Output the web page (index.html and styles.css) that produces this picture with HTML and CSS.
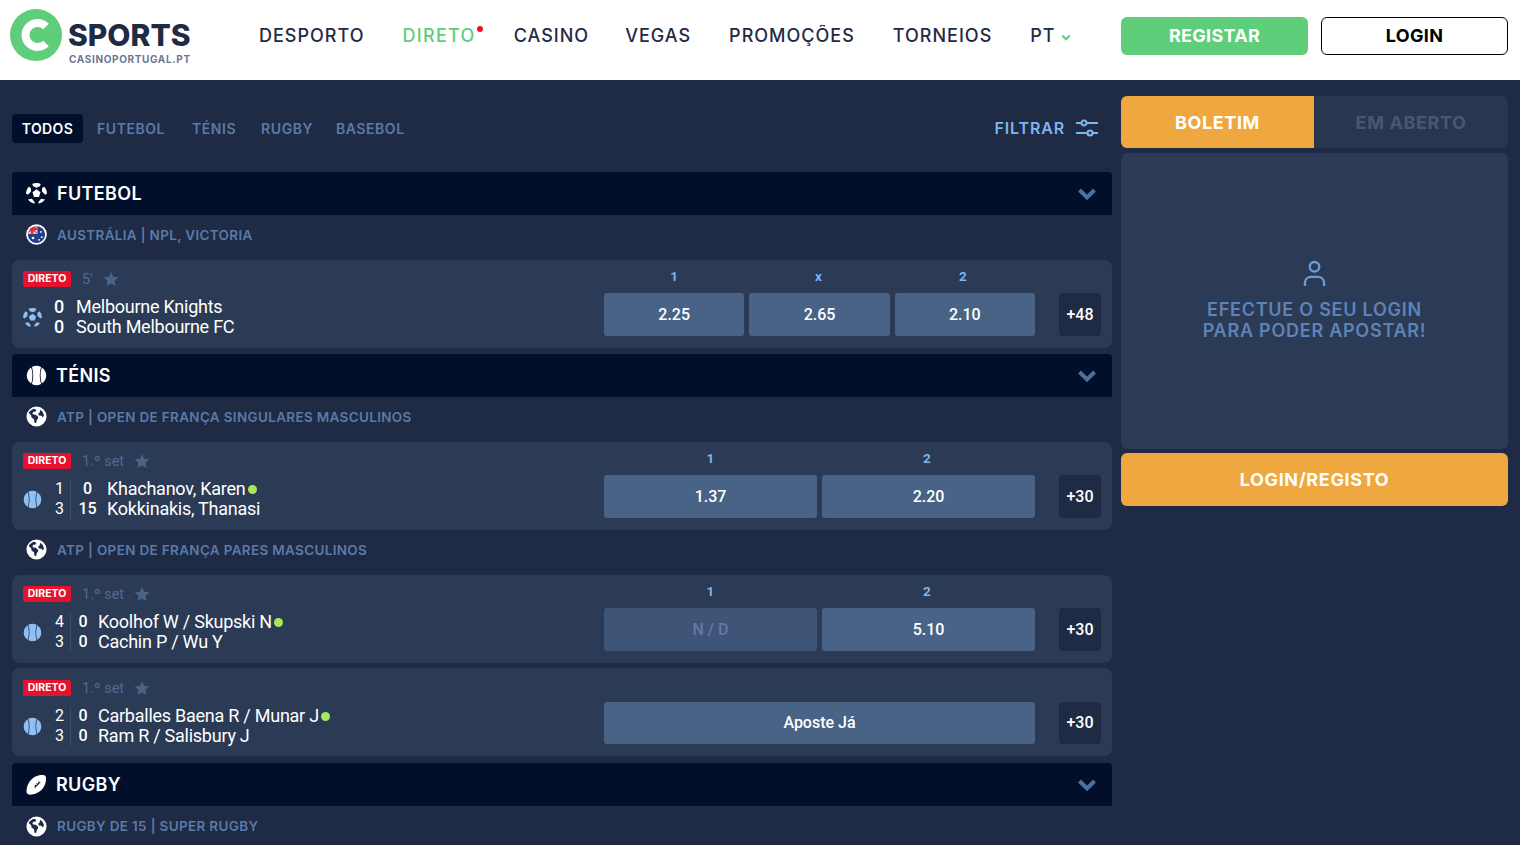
FILE: index.html
```html
<!DOCTYPE html>
<html lang="pt">
<head>
<meta charset="utf-8">
<title>CSports</title>
<link rel="stylesheet" href="styles.css">
</head>
<body>
<svg class="defs" width="0" height="0" aria-hidden="true">
  <defs>
    <symbol id="ball" viewBox="1 1 22 22">
      <path d="M12 7.600l4.200 3.100-1.600 4.900H9.400l-1.600-4.900z"/>
      <path d="M7.500 2A11 11 0 0 1 16.500 2L15.500 4.500 12 6 8.500 4.500z"/>
      <path d="M3.800 4.800L6.200 6.300 6.300 10 2.900 13.200 1 12A11 11 0 0 1 3.800 4.800z"/>
      <path d="M20.200 4.800L17.800 6.300 17.700 10 21.100 13.200 23 12A11 11 0 0 0 20.200 4.800z"/>
      <path d="M3 18.300L7.200 17.600 10 21 9.700 22.800A11 11 0 0 1 3 18.300z"/>
      <path d="M21 18.300L16.800 17.600 14 21 14.300 22.800A11 11 0 0 0 21 18.300z"/>
    </symbol>
    <symbol id="tennis" viewBox="0 0 24 24">
      <path d="M5.900 2.800Q8.800 12 5.900 21.200A11 11 0 0 1 5.900 2.800z"/>
      <path d="M6.800 2.200Q9.800 12 6.800 21.800A11 11 0 0 0 17.200 21.800Q14.200 12 17.200 2.200A11 11 0 0 0 6.800 2.200z"/>
      <path d="M18.100 2.800Q15.200 12 18.100 21.200A11 11 0 0 0 18.100 2.800z"/>
    </symbol>
    <symbol id="globe" viewBox="0 0 24 24">
      <path fill-rule="evenodd" d="M12 .5a11.500 11.500 0 1 0 0 23 11.500 11.500 0 0 0 0-23zM9 3.200c1.300.3 2.100.9 2.800 1.700l-1.300 1.700-2-.1-1.300 1.900 1.200 1.300 2.600.2 2.300 1.700.8 2.100-1.700 2.400-.8 3.400-1.800-.4-.8-4.300-2.600-1.500-.5-2.800-2.800-2.500C4.300 5.900 6.400 3.900 9 3.200zM16.200 4.400l2.900 2.400 1.400 3.500-1.100 2.900-1.900-2-2.700-.3-1-2 1.800-1.500z"/>
    </symbol>
    <symbol id="rugby" viewBox="0 0 24 24">
      <path fill-rule="evenodd" d="M15 1.500c3.300-.7 6-.6 7 .5 1 1 1.200 3.700.5 7-.7 3.200-2.300 6.800-4.900 9.300-2.600 2.600-6.200 4.200-9.400 4.900-3.200.7-5.700.5-6.700-.5s-1.200-3.500-.5-6.700c.7-3.200 2.300-6.800 4.900-9.400C8.300 4 11.800 2.200 15 1.500zM14.500 8.200l-.9.900 1 1-1.100 1.100-1-1-.9.900 1 1-1.100 1.100-1-1-.9.900 1 1-1.200 1.100.8.800 4.300-4.300 1.100-1.100 1-1-.8-.8-1 1z"/>
    </symbol>
    <symbol id="star" viewBox="0 0 24 24">
      <path d="M12 1.500l3.300 7 7.700 1-5.700 5.300 1.500 7.600L12 18.600l-6.800 3.800 1.500-7.600L1 9.500l7.700-1z"/>
    </symbol>
    <symbol id="chev" viewBox="0 0 20 14">
      <path d="M2.500 3L10 10.500 17.500 3" fill="none" stroke="currentColor" stroke-width="4"/>
    </symbol>
  </defs>
</svg>

<header class="topbar">
  <a class="logo">
    <svg class="logo-mark" viewBox="0 0 52 52">
      <circle cx="26" cy="26" r="26" fill="#5fce7a"/>
      <path d="M36 17.500A12 12 0 1 0 36 34.500" fill="none" stroke="#fff" stroke-width="8"/>
    </svg>
    <span class="logo-text">
      <span class="logo-name">SPORTS</span>
      <span class="logo-sub">CASINOPORTUGAL.PT</span>
    </span>
  </a>
  <nav class="nav">
    <a class="nav-item">DESPORTO</a>
    <a class="nav-item live">DIRETO<i class="live-dot"></i></a>
    <a class="nav-item tight">CASINO</a>
    <a class="nav-item">VEGAS</a>
    <a class="nav-item">PROMOÇÕES</a>
    <a class="nav-item">TORNEIOS</a>
    <a class="nav-item">PT<svg class="lang-chev"><use href="#chev"/></svg></a>
  </nav>
  <div class="auth">
    <a class="btn btn-green">REGISTAR</a>
    <a class="btn btn-outline">LOGIN</a>
  </div>
</header>

<main class="page">
  <section class="events">
    <div class="filters">
      <a class="chip on">TODOS</a>
      <a class="chip c1">FUTEBOL</a>
      <a class="chip c2">TÉNIS</a>
      <a class="chip c3">RUGBY</a>
      <a class="chip c4">BASEBOL</a>
      <a class="filter-btn">FILTRAR
        <svg class="filter-ico" viewBox="0 0 24 18" fill="none" stroke="currentColor" stroke-width="2.200">
          <path d="M1 4h5M12 4h11M1 14h11M18 14h5"/>
          <circle cx="9" cy="4" r="2.500"/><circle cx="15" cy="14" r="2.500"/>
        </svg>
      </a>
    </div>

    <div class="sport">
      <svg class="sport-ico"><use href="#ball"/></svg><span class="sport-name s1">FUTEBOL</span>
      <svg class="sport-chev"><use href="#chev"/></svg>
    </div>
    <div class="league">
      <svg class="league-ico" viewBox="0 0 24 24">
        <defs><clipPath id="au"><circle cx="12" cy="12" r="9.800"/></clipPath></defs>
        <circle cx="12" cy="12" r="11.800" fill="#fff"/>
        <circle cx="12" cy="12" r="9.800" fill="#233f8a"/>
        <g clip-path="url(#au)">
          <path d="M1 1h12v10H1z" fill="#f4f4f8"/>
          <path d="M1 5.500h12M7 1v10" stroke="#e0283c" stroke-width="3"/>
          <path d="M2 2l10 8M12 2L2 10" stroke="#e0283c" stroke-width="1.200"/>
        </g>
        <circle cx="17" cy="9" r="1" fill="#fff"/><circle cx="18" cy="15" r="1" fill="#fff"/><circle cx="8" cy="16" r="1.500" fill="#fff"/><circle cx="15" cy="18" r="1" fill="#fff"/>
      </svg>
      <span>AUSTRÁLIA | NPL, VICTORIA</span>
    </div>
    <article class="card">
      <div class="info">
        <div class="meta"><b class="badge">DIRETO</b><span class="time">5'</span><svg class="star"><use href="#star"/></svg></div>
        <div class="teams">
          <svg class="team-ico"><use href="#ball"/></svg>
          <div class="soccer-score"><span>0</span><span>0</span></div>
          <div class="names gap-a"><span>Melbourne Knights</span><span>South Melbourne FC</span></div>
        </div>
      </div>
      <div class="market">
        <div class="labels"><span>1</span><span>x</span><span>2</span></div>
        <div class="odds"><a class="odd">2.25</a><a class="odd">2.65</a><a class="odd">2.10</a></div>
      </div>
      <a class="more">+48</a>
    </article>

    <div class="sport s-gap">
      <svg class="sport-ico"><use href="#tennis"/></svg><span class="sport-name">TÉNIS</span>
      <svg class="sport-chev"><use href="#chev"/></svg>
    </div>
    <div class="league">
      <svg class="league-ico"><use href="#globe"/></svg>
      <span>ATP | OPEN DE FRANÇA SINGULARES MASCULINOS</span>
    </div>
    <article class="card">
      <div class="info">
        <div class="meta"><b class="badge">DIRETO</b><span class="time">1.º set</span><svg class="star"><use href="#star"/></svg></div>
        <div class="teams">
          <svg class="team-ico"><use href="#tennis"/></svg>
          <div class="sets"><span>1</span><span>3</span></div>
          <div class="points wide"><span>0</span><span>15</span></div>
          <div class="names"><span>Khachanov, Karen<i class="serve"></i></span><span>Kokkinakis, Thanasi</span></div>
        </div>
      </div>
      <div class="market">
        <div class="labels"><span>1</span><span>2</span></div>
        <div class="odds"><a class="odd">1.37</a><a class="odd">2.20</a></div>
      </div>
      <a class="more">+30</a>
    </article>

    <div class="league">
      <svg class="league-ico"><use href="#globe"/></svg>
      <span>ATP | OPEN DE FRANÇA PARES MASCULINOS</span>
    </div>
    <article class="card">
      <div class="info">
        <div class="meta"><b class="badge">DIRETO</b><span class="time">1.º set</span><svg class="star"><use href="#star"/></svg></div>
        <div class="teams">
          <svg class="team-ico"><use href="#tennis"/></svg>
          <div class="sets"><span>4</span><span>3</span></div>
          <div class="points"><span>0</span><span>0</span></div>
          <div class="names"><span>Koolhof W / Skupski N<i class="serve"></i></span><span>Cachin P / Wu Y</span></div>
        </div>
      </div>
      <div class="market">
        <div class="labels"><span>1</span><span>2</span></div>
        <div class="odds"><a class="odd off">N / D</a><a class="odd">5.10</a></div>
      </div>
      <a class="more">+30</a>
    </article>

    <article class="card c-gap">
      <div class="info">
        <div class="meta"><b class="badge">DIRETO</b><span class="time">1.º set</span><svg class="star"><use href="#star"/></svg></div>
        <div class="teams">
          <svg class="team-ico"><use href="#tennis"/></svg>
          <div class="sets"><span>2</span><span>3</span></div>
          <div class="points"><span>0</span><span>0</span></div>
          <div class="names"><span>Carballes Baena R / Munar J<i class="serve"></i></span><span>Ram R / Salisbury J</span></div>
        </div>
      </div>
      <div class="market">
        <div class="labels"></div>
        <div class="odds"><a class="odd">Aposte Já</a></div>
      </div>
      <a class="more">+30</a>
    </article>

    <div class="sport r-gap">
      <svg class="sport-ico"><use href="#rugby"/></svg><span class="sport-name">RUGBY</span>
      <svg class="sport-chev"><use href="#chev"/></svg>
    </div>
    <div class="league last">
      <svg class="league-ico"><use href="#globe"/></svg>
      <span>RUGBY DE 15 | SUPER RUGBY</span>
    </div>
  </section>

  <aside class="slip">
    <div class="slip-tabs">
      <a class="slip-tab active">BOLETIM</a>
      <a class="slip-tab">EM ABERTO</a>
    </div>
    <div class="slip-body">
      <svg class="user-ico" viewBox="0 0 24 28" fill="none" stroke="currentColor" stroke-width="2.500">
        <circle cx="12" cy="7" r="5"/>
        <path d="M2 27v-3c0-4 3-6.500 6.500-6.500h7c3.500 0 6.500 2.500 6.500 6.500v3"/>
      </svg>
      <p class="slip-msg">EFECTUE O SEU LOGIN<br>PARA PODER APOSTAR!</p>
    </div>
    <a class="slip-login">LOGIN/REGISTO</a>
  </aside>
</main>
</body>
</html>
```
FILE: styles.css
```css
* { box-sizing: border-box; }
html, body { margin: 0; padding: 0; }
body {
  height: 845px;
  overflow: hidden;
  background: #1f2a44;
  font-family: Inter, "Liberation Sans", sans-serif;
  color: #fff;
}
a { display: block; }
.defs { display: block; height: 0; }

.topbar {
  height: 80px;
  background: #fff;
  display: flex;
  align-items: center;
  padding: 0 12px 0 10px;
}
.logo { display: flex; align-items: flex-start; width: 249px; height: 52px; margin-top: -11px; gap: 7px; }
.logo-mark { width: 52px; height: 52px; flex: none; }
.logo-text { display: flex; flex-direction: column; padding-top: 11px; }
.logo-name { font-size: 30px; line-height: 31px; font-weight: 800; color: #1f2a44; margin-left: -1px; }
.logo-sub { font-size: 10px; line-height: 12px; margin-top: 2px; font-weight: 700; color: #6d7693; letter-spacing: .65px; }

.nav { display: flex; gap: 38px; align-items: center; margin-top: -9px; flex: 1; }
.nav-item { position: relative; font-size: 18px; line-height: 22px; font-weight: 500; color: #1f2a44; letter-spacing: 1px; display: flex; align-items: center; }
.nav-item.live { color: #5fce7a; letter-spacing: 1.300px; }
.nav-item.tight { margin-right: -2px; }
.live-dot { position: absolute; right: -7px; top: 1px; width: 6px; height: 6px; border-radius: 50%; background: #e8112d; }
.lang-chev { width: 10px; height: 7px; margin-left: 5px; margin-top: 4px; color: #5fce7a; }

.auth { display: flex; gap: 13px; margin-top: -9px; }
.btn {
  width: 187px;
  height: 38px;
  border-radius: 6px;
  font-size: 18px;
  font-weight: 700;
  line-height: 38px;
  text-align: center;
  letter-spacing: .3px;
}
.btn-green { background: #5fce7a; color: #fff; }
.btn-outline { background: #fff; color: #000; border: 1px solid #000; line-height: 36px; }

.page { display: flex; gap: 9px; padding: 0 12px; }
.events { width: 1100px; flex: none; }
.filters { height: 92px; display: flex; align-items: center; padding-top: 4px; }
.chip { font-size: 14px; font-weight: 600; color: #5a7aa8; line-height: 29px; letter-spacing: .55px; }
.chip.on { background: #020f2a; color: #fff; border-radius: 4px; width: 71px; text-align: center; letter-spacing: .35px; }
.c1 { margin-left: 14px; }
.c2 { margin-left: 27px; }
.c3 { margin-left: 25px; }
.c4 { margin-left: 23px; }
.filter-btn { margin-left: auto; margin-right: 13px; display: flex; align-items: center; gap: 10px; font-size: 16px; font-weight: 600; color: #7eb4ee; letter-spacing: .85px; }
.filter-ico { width: 24px; height: 18px; }

.sport {
  height: 43px;
  background: #020f2a;
  border-radius: 4px 4px 0 0;
  display: flex;
  align-items: center;
  padding: 0 15px 0 14px;
}
.s-gap { margin-top: 6px; }
.r-gap { margin-top: 7px; }
.sport-ico { width: 21px; height: 21px; fill: #fff; flex: none; }
.sport-name { margin-left: 9px; font-size: 18px; font-weight: 600; letter-spacing: .35px; }
.sport-name.s1 { margin-left: 10px; }
.sport-chev { margin-left: auto; width: 20px; height: 14px; color: #50709c; }

.league {
  height: 45px;
  display: flex;
  align-items: center;
  padding: 0 0 6px 14px;
  font-size: 13.500px;
  font-weight: 600;
  color: #5a7aa8;
  letter-spacing: .33px;
  gap: 10px;
}
.league.last { height: 40px; padding-bottom: 0; }
.league-ico { width: 21px; height: 21px; fill: #fff; flex: none; }

.card {
  height: 88px;
  background: #2b3a55;
  border-radius: 8px;
  padding: 0 11px;
  display: flex;
  align-items: flex-start;
}
.c-gap { margin-top: 5px; }
.c-gap .info { padding-top: 12px; }
.c-gap .market { padding-top: 9px; }
.c-gap .odd { height: 42px; line-height: 41px; }
.c-gap .more { margin-top: 34px; height: 42px; line-height: 41px; }
.info { width: 581px; flex: none; padding-top: 11px; }
.meta { display: flex; align-items: center; height: 16px; font-family: Roboto, sans-serif; }
.badge { width: 48px; height: 16px; background: #e8112d; border-radius: 2px; font-family: Inter, sans-serif; font-size: 10.500px; line-height: 16px; font-weight: 700; text-align: center; color: #fff; }
.time { margin-left: 11px; font-size: 14.500px; color: #506a90; }
.star { width: 16px; height: 16px; margin-left: 10px; fill: #4a6488; }
.teams { display: flex; margin-top: 10px; align-items: center; font-family: Roboto, sans-serif; font-size: 18px; line-height: 20px; }
.team-ico { width: 19px; height: 19px; fill: #8fc0f4; flex: none; }
.soccer-score { display: flex; flex-direction: column; margin-left: 12px; width: 10px; text-align: center; font-weight: 500; }
.sets { display: flex; flex-direction: column; margin-left: 12px; width: 17px; border-right: 1px solid #3e4f6d; font-size: 16px; text-align: left; padding-left: 1px; }
.points { display: flex; flex-direction: column; margin-left: 7px; width: 10px; font-size: 16px; font-weight: 500; text-align: center; }
.points.wide { width: 19px; margin-left: 7px; }
.names { display: flex; flex-direction: column; margin-left: 10px; letter-spacing: -.25px; }
.names span { display: flex; align-items: center; }
.gap-a { margin-left: 12px; }
.serve { width: 9px; height: 9px; margin-left: 2px; border-radius: 50%; background: #a6e85a; }

.market { width: 431px; flex: none; padding-top: 8px; }
.labels { height: 16px; margin-left: -2px; display: flex; font-family: Roboto, sans-serif; font-size: 13.500px; line-height: 16px; font-weight: 700; color: #7eb4ee; }
.labels span { flex: 1; text-align: center; }
.odds { display: flex; gap: 5px; margin-top: 9px; }
.odd { flex: 1; height: 43px; background: #496386; border-radius: 3px; font-family: Roboto, sans-serif; font-size: 16px; font-weight: 500; line-height: 43px; text-align: center; }
.odd.off { color: #5f7ba5; background: #3f5577; }
.more { margin-left: 24px; margin-top: 33px; width: 42px; height: 43px; background: #1f2a44; border-radius: 4px; font-family: Roboto, sans-serif; font-size: 16px; font-weight: 500; line-height: 43px; text-align: center; }

.slip { width: 387px; flex: none; padding-top: 16px; }
.slip-tabs { display: flex; height: 52px; background: #2a3650; border-radius: 6px; }
.slip-tab { width: 194px; font-size: 18px; font-weight: 700; line-height: 54px; text-align: center; color: #475872; letter-spacing: .6px; }
.slip-tab.active { width: 193px; background: #eea83f; color: #fff; border-radius: 6px 0 0 6px; }
.slip-body { margin-top: 5px; height: 296px; background: #2b3a55; border-radius: 6px; display: flex; flex-direction: column; align-items: center; padding-top: 107px; }
.user-ico { width: 23px; height: 27px; margin-left: -1px; color: #6d9bd2; }
.slip-msg { margin: 12px 0 0; font-size: 18px; line-height: 21px; font-weight: 600; text-align: center; color: #5d84b8; letter-spacing: .75px; }
.slip-login { margin-top: 4px; height: 53px; background: #eea83f; border-radius: 6px; font-size: 18px; font-weight: 700; line-height: 53px; text-align: center; color: #fff; letter-spacing: .65px; }
```
